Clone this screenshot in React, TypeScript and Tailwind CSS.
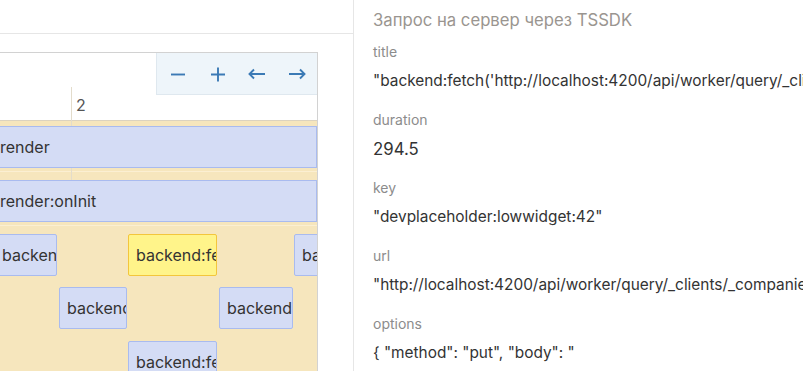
import React from 'react';

const fields = [
  { label: 'title', value: `"backend:fetch('http://localhost:4200/api/worker/query/_clients/_companies')"`, num: false },
  { label: 'duration', value: '294.5', num: true },
  { label: 'key', value: '"devplaceholder:lowwidget:42"', num: false },
  { label: 'url', value: '"http://localhost:4200/api/worker/query/_clients/_companies"', num: false },
  { label: 'options', value: '{ "method": "put", "body": "' , num: false },
];

const boxes = [
  { top: 12, left: -6, width: 63, active: false },
  { top: 12, left: 128, width: 89, active: true },
  { top: 12, left: 294, width: 89, active: false },
  { top: 65, left: 59, width: 68, active: false },
  { top: 65, left: 219, width: 74, active: false },
  { top: 119, left: 128, width: 89, active: false },
];

function Icon({ d }: { d: string }) {
  return (
    <div className="flex w-[40px] items-center justify-center">
      <svg width="18" height="16" viewBox="0 0 18 16" fill="none" stroke="#3b7ab5" strokeWidth="1.9" strokeLinecap="butt">
        <path d={d} />
      </svg>
    </div>
  );
}

function Controls() {
  return (
    <div className="absolute top-0 right-0 z-20 flex h-[42px] w-[161px] items-center border-b border-l border-[#dfe8ef] bg-[#eef5fa] pl-px">
      <Icon d="M2 8.5H16" />
      <Icon d="M2 8.5H16M9 1.5V15.5" />
      <Icon d="M17 8H1.5M6 3.5L1.5 8L6 12.5" />
      <Icon d="M1 8H16.5M12 3.5L16.5 8L12 12.5" />
    </div>
  );
}

function Bar({ label }: { label: string }) {
  return (
    <div className="relative z-10 -ml-px flex h-[42px] items-center overflow-hidden whitespace-nowrap border border-[#a9bbef] bg-[#d4dcf5] text-[16px] text-[#333]">
      {label}
    </div>
  );
}

export default function App() {
  return (
    <div className="flex h-[371px] w-[803px] overflow-hidden bg-white font-['Inter','Noto_Sans',sans-serif]">
      {/* Timeline */}
      <div className="flex w-[353px] shrink-0 flex-col">
        <div className="h-[34px] border-b border-[#e6e6e6]" />
        <div className="mt-[18px] flex w-[318px] flex-1 flex-col overflow-hidden border-t border-r border-[#d2d2d2]">
          <div className="relative flex flex-1 flex-col">
            {/* grid line */}
            <div className="absolute top-[34px] bottom-0 left-[71px] w-px bg-[#e3dccb]" />
            <Controls />
            <div className="h-[68px] shrink-0 border-b border-[#dcd3bf]">
              <div className="pt-[42px] pl-[76px] text-[16px] leading-[20px] text-[#555]">2</div>
            </div>
            <div className="h-[5px] shrink-0 bg-[#f6e6bd]" />
            <Bar label="render" />
            <div className="flex h-[12px] shrink-0 flex-col bg-[#f6e6bd]">
              <div className="mt-[3px] h-px bg-[#fbefd2]" />
            </div>
            <Bar label="render:onInit" />
            <div className="relative flex-1 bg-[#f6e6bd]">
              <div className="mt-[3px] h-px bg-[#fbefd2]" />
              {boxes.map((b, i) => (
                <div
                  key={i}
                  className={
                    b.active
                      ? 'absolute flex h-[42px] items-center overflow-hidden whitespace-nowrap rounded-[2px] border border-[#f3c63c] bg-[#fff48a] pl-[7px] text-[16px] text-[#333]'
                      : 'absolute flex h-[42px] items-center overflow-hidden whitespace-nowrap rounded-[2px] border border-[#a9bbef] bg-[#d4dcf5] pl-[7px] text-[16px] text-[#333]'
                  }
                  style={{ top: b.top, left: b.left, width: b.width }}
                >
                  backend:fetch
                </div>
              ))}
            </div>
          </div>
        </div>
      </div>

      {/* Details panel */}
      <div className="flex min-w-0 flex-1 flex-col overflow-hidden border-l border-[#e6e6e6] pt-[10px] pl-[19px] whitespace-nowrap">
        <div className="mb-[12px] text-[16.7px] leading-[20px] text-[#9a9590]">Запрос на сервер через TSSDK</div>
        {fields.map((f) => (
          <div key={f.label} className="mb-[19px]">
            <div className="text-[14px] leading-[20px] text-[#8c8c8c]">{f.label}</div>
            <div className={f.num ? 'mt-[9px] text-[16.8px] leading-[20px] text-[#333]' : 'mt-[9px] text-[15.4px] leading-[20px] text-[#333]'}>
              {f.value}
            </div>
          </div>
        ))}
      </div>
    </div>
  );
}
